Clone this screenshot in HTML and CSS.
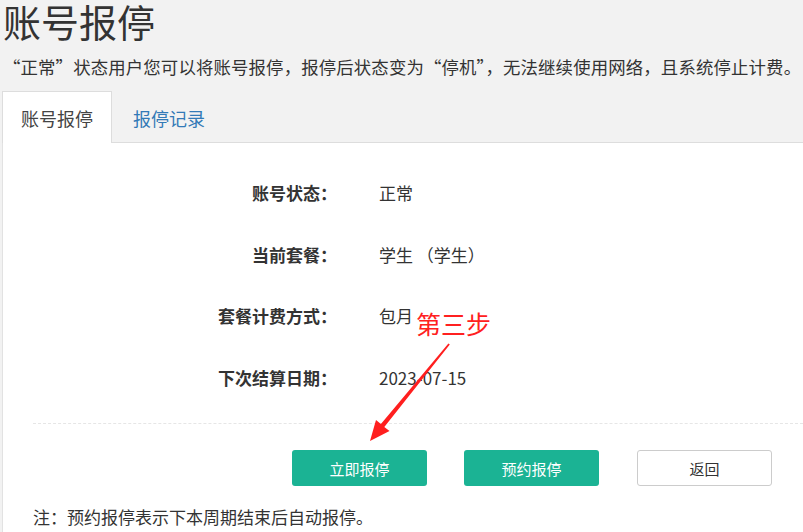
FILE: index.html
```html
<!DOCTYPE html>
<html lang="zh-CN">
    <head>
        <meta charset="UTF-8">
        <meta name="viewport" content="width=device-width, initial-scale=1.0">
        <title>账号报停</title>
        <link rel="stylesheet" href="styles.css">
    </head>
    <body>
        <div class="page">
            <h1 class="title">账号报停</h1>
            <p class="intro">“正常”状态用户您可以将账号报停，报停后状态变为“停机”，无法继续使用网络，且系统停止计费。</p>

            <div class="tabs">
                <a class="tab active" href="#">账号报停</a>
                <a class="tab" href="#">报停记录</a>
            </div>

            <div class="panel">
                <div class="info">
                    <div class="info-row">
                        <span class="label">账号状态：</span>
                        <span class="value">正常</span>
                    </div>
                    <div class="info-row">
                        <span class="label">当前套餐：</span>
                        <span class="value">学生 （学生）</span>
                    </div>
                    <div class="info-row">
                        <span class="label">套餐计费方式：</span>
                        <span class="value">包月</span>
                    </div>
                    <div class="info-row">
                        <span class="label">下次结算日期：</span>
                        <span class="value">2023-07-15</span>
                    </div>
                </div>

                <div class="divider"></div>

                <div class="actions">
                    <button class="btn btn-green">立即报停</button>
                    <button class="btn btn-green">预约报停</button>
                    <button class="btn btn-plain">返回</button>
                </div>

                <p class="note">注：预约报停表示下本周期结束后自动报停。</p>

                <!-- 标注 -->
                <span class="step-label">第三步</span>
                <svg class="step-arrow" width="100" height="110" viewBox="0 0 100 110">
                    <polygon fill="#ff1f1f" points="88.4,3.5 89.8,4.6 24.3,86.9 29.5,91 10,101 16,80 20.9,84.1"/>
                </svg>
            </div>
        </div>
    </body>
</html>
```

FILE: styles.css
```css
body {
    margin: 0;
    padding: 0;
    font-family: "Microsoft YaHei", "Noto Sans CJK SC", sans-serif;
    color: #333;
    background-color: #f2f2f2;
}

.page {
    width: 803px;
    height: 532px;
    overflow: hidden;
    padding-left: 2px;
    box-sizing: border-box;
}

.title {
    margin: 0 0 0 1px;
    font-size: 38px;
    font-weight: normal;
    line-height: 42px;
    color: #333;
}

.intro {
    margin: 13px 0 0 1px;
    font-size: 17.4px;
    line-height: 24px;
    letter-spacing: 0.15px;
    color: #333;
    white-space: nowrap;
}

.tabs {
    display: flex;
    margin-top: 12px;
    border-bottom: 1px solid #ddd;
    height: 51px;
}

.tab {
    display: flex;
    align-items: center;
    padding: 0 19px 0 18px;
    font-size: 18px;
    color: #337ab7;
    text-decoration: none;
    border: 1px solid transparent;
    border-bottom: none;
    margin-bottom: -1px;
}

.tab.active {
    color: #444;
    background-color: #fff;
    border-color: #ddd;
    padding-right: 18px;
}

.tab + .tab {
    padding-left: 20px;
}

.panel {
    position: relative;
    background-color: #fff;
    border-left: 1px solid #e2e2e2;
    height: 400px;
    padding-top: 19px;
    box-sizing: border-box;
}

.info-row {
    display: grid;
    grid-template-columns: 334px 1fr;
    column-gap: 42px;
    height: 61.6px;
    align-items: center;
    font-size: 17px;
}

.label {
    text-align: right;
    font-weight: bold;
    color: #333;
}

.value {
    color: #333;
}

.divider {
    margin: 15px 0 0 30px;
    border-top: 1px dashed #e6e6e6;
}

.actions {
    display: flex;
    gap: 37px;
    margin: 26px 0 0 289px;
}

.btn {
    width: 135px;
    height: 36px;
    font-family: inherit;
    font-size: 15px;
    border-radius: 3px;
    cursor: pointer;
}

.btn-green {
    background-color: #1bb394;
    color: #fff;
    border: none;
}

.btn-plain {
    background-color: #fff;
    color: #333;
    border: 1px solid #ccc;
    margin-left: 1px;
}

.note {
    margin: 19px 0 0 30px;
    font-size: 17px;
    line-height: 24px;
    color: #333;
}

.step-label {
    position: absolute;
    left: 413px;
    top: 163px;
    font-size: 25px;
    color: #ff2020;
    background-color: #fff;
    line-height: 34px;
}

.step-arrow {
    position: absolute;
    left: 357px;
    top: 197px;
}
```
